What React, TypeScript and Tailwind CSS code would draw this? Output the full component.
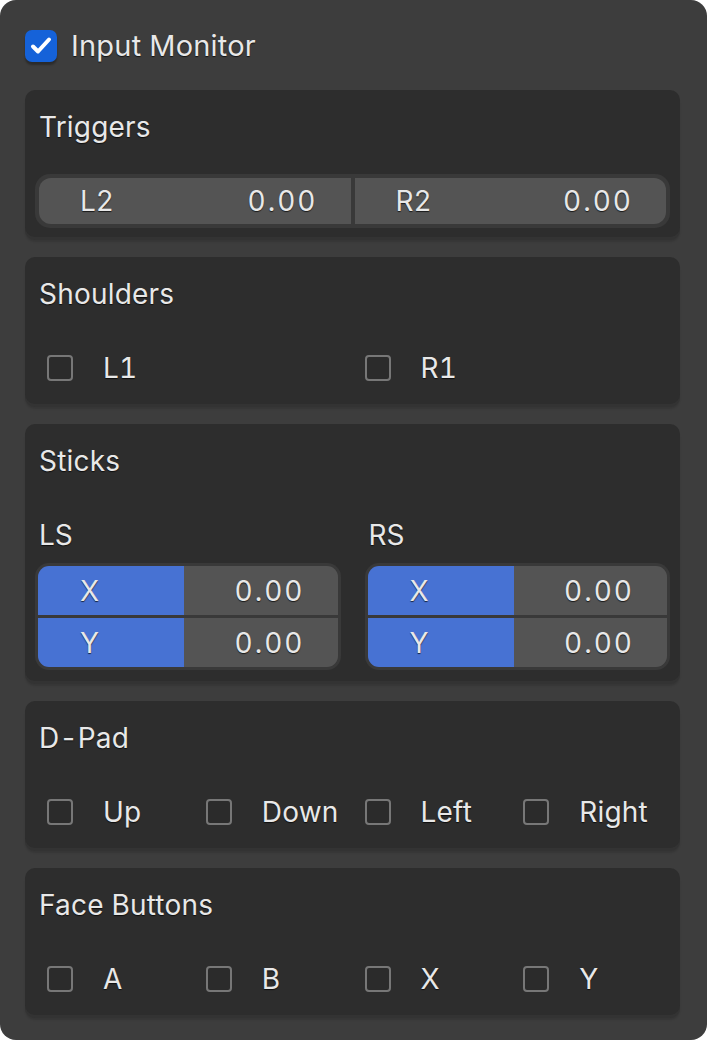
import type { ReactNode } from "react";

const font = { fontFamily: "Inter, 'Noto Sans', sans-serif" };
const shadowText = "[text-shadow:0_1px_1px_rgba(0,0,0,0.7)]";

function Panel({ title, children }: { title: string; children: ReactNode }) {
  return (
    <div className="rounded-[10px] bg-[#2d2d2d] px-[10px] pt-[22px] shadow-[0_3px_0_#333333,0_5px_2px_rgba(0,0,0,0.12)]">
      <div className={`h-[30px] pl-[4px] text-[28px] leading-[30px] tracking-[0.2px] text-[#e8e8e8] ${shadowText}`}>
        {title}
      </div>
      {children}
    </div>
  );
}

function Check({ label }: { label: string }) {
  return (
    <div className="flex h-[40px] items-center pl-[12px]">
      <span className="h-[26px] w-[26px] shrink-0 rounded-[4px] border-2 border-[#777777] bg-[#2b2b2b]" />
      <span className={`ml-[30px] text-[28px] tracking-[0.2px] text-[#e8e8e8] ${shadowText}`}>{label}</span>
    </div>
  );
}

function CheckRow({ labels }: { labels: string[] }) {
  return (
    <div
      className="mt-[39px] grid pb-[16px]"
      style={{ gridTemplateColumns: `repeat(${labels.length}, minmax(0, 1fr))` }}
    >
      {labels.map((l) => (
        <Check key={l} label={l} />
      ))}
    </div>
  );
}

function AxisGroup({ name }: { name: string }) {
  return (
    <div className="flex-1">
      <div className={`h-[30px] pl-[4px] text-[28px] leading-[30px] text-[#e8e8e8] ${shadowText}`}>{name}</div>
      <div className="mt-[13px] rounded-[14px] bg-[#393939] p-[3px]">
        <div className="flex flex-col gap-[3px] overflow-hidden rounded-[11px] bg-[#393939]">
          {["X", "Y"].map((axis) => (
            <div key={axis} className="flex h-[49px] text-[28px] text-[#e8e8e8]">
              <div className={`flex w-[146px] items-center bg-[#4772d3] pl-[42px] ${shadowText}`}>{axis}</div>
              <div className={`flex flex-1 items-center justify-end bg-[#545454] pr-[33px] tracking-[2px] ${shadowText}`}>
                0.00
              </div>
            </div>
          ))}
        </div>
      </div>
    </div>
  );
}

export default function App() {
  return (
    <div className="min-h-screen bg-white tabular-nums" style={font}>
      <div className="h-[1040px] w-[707px] rounded-[16px] bg-[#3d3d3d] pl-[25px] pr-[27px] pt-[30px]">
        <div className="flex h-[32px] items-center">
          <span className="flex h-[32px] w-[32px] items-center justify-center rounded-[7px] bg-[#1562d9] shadow-[0_3px_2px_rgba(0,0,0,0.3)]">
            <svg width="24" height="24" viewBox="0 0 24 24" fill="none" stroke="white" strokeWidth="4" strokeLinecap="round" strokeLinejoin="round">
              <path d="M4 12.5l5 5L20 5.5" />
            </svg>
          </span>
          <span className={`ml-[14px] text-[29px] tracking-[0.2px] text-[#e8e8e8] ${shadowText}`}>Input Monitor</span>
        </div>

        <div className="mt-[28px] flex flex-col gap-[20px]">
          <Panel title="Triggers">
            <div className="mt-[32px] pb-[9px]">
              <div className="flex rounded-[15px] bg-[#393939] p-[4px]">
                <div className="flex flex-1 gap-[4px] overflow-hidden rounded-[12px]">
                  {["L2", "R2"].map((t) => (
                    <div
                      key={t}
                      className={`flex h-[46px] flex-1 items-center justify-between bg-[#545454] pl-[41px] pr-[33px] text-[28px] text-[#e8e8e8] ${shadowText}`}
                    >
                      <span>{t}</span>
                      <span className="tracking-[2px]">0.00</span>
                    </div>
                  ))}
                </div>
              </div>
            </div>
          </Panel>

          <Panel title="Shoulders">
            <CheckRow labels={["L1", "R1"]} />
          </Panel>

          <Panel title="Sticks">
            <div className="mt-[44px] flex gap-[24px] pb-[11px]">
              <AxisGroup name="LS" />
              <AxisGroup name="RS" />
            </div>
          </Panel>

          <Panel title="D-Pad">
            <CheckRow labels={["Up", "Down", "Left", "Right"]} />
          </Panel>

          <Panel title="Face Buttons">
            <CheckRow labels={["A", "B", "X", "Y"]} />
          </Panel>
        </div>
      </div>
    </div>
  );
}
